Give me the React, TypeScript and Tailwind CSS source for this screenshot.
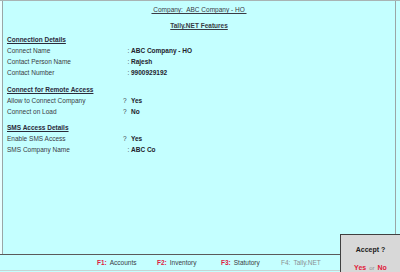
import React from "react";

type Row = { label: string; mark: ":" | "?"; value: string };

const SECTIONS: { title: string; gap: string; rows: Row[] }[] = [
  {
    title: "Connection Details",
    gap: "mt-[3px]",
    rows: [
      { label: "Connect Name", mark: ":", value: "ABC Company - HO" },
      { label: "Contact Person Name", mark: ":", value: "Rajesh" },
      { label: "Contact Number", mark: ":", value: "9900929192" },
    ],
  },
  {
    title: "Connect for Remote Access",
    gap: "mt-[6px]",
    rows: [
      { label: "Allow to Connect Company", mark: "?", value: "Yes" },
      { label: "Connect on Load", mark: "?", value: "No" },
    ],
  },
  {
    title: "SMS Access Details",
    gap: "mt-[5px]",
    rows: [
      { label: "Enable SMS Access", mark: "?", value: "Yes" },
      { label: "SMS Company Name", mark: ":", value: "ABC Co" },
    ],
  },
];

const KEYS = [
  { key: "F1:", label: "Accounts", w: "w-[60px]", off: false },
  { key: "F2:", label: "Inventory", w: "w-[64px]", off: false },
  { key: "F3:", label: "Statutory", w: "w-[60px]", off: false },
  { key: "F4:", label: "Tally.NET", w: "w-[60px]", off: true },
];

export default function App() {
  return (
    <div
      className="relative w-[400px] h-[272px] overflow-hidden bg-[#c4ffff] text-[6.5px] text-[#3a3a44]"
      style={{ fontFamily: '"Liberation Sans", Arial, sans-serif' }}
    >
      {/* Main panel */}
      <div className="h-[255px] border-t border-t-[#a8b4b4] border-b border-b-[#5a5a5a] flex">
        <div className="w-[2px] bg-[#e8ffff]" />
        <div className="flex-1 border-l border-l-[#9aa6a6] border-r border-r-[#9aa6a6] mr-[4px] flex flex-col">
          <div className="h-[14px] flex items-end justify-center">
            <span className="underline leading-[11px]">&nbsp;Company:&nbsp; ABC Company - HO&nbsp;</span>
          </div>
          <div className="h-[16px] flex items-end justify-center">
            <span className="font-bold underline leading-[11px]">Tally.NET Features</span>
          </div>

          <div className="pl-[4px] flex flex-col">
            {SECTIONS.map((s) => (
              <div key={s.title} className={s.gap}>
                <div className="h-[11px] leading-[11px] font-bold underline text-[#2a2a3a]">{s.title}</div>
                {s.rows.map((r) => (
                  <div key={r.label} className="h-[11px] leading-[11px] flex">
                    <span className="w-[116px]">{r.label}</span>
                    {r.mark === "?" ? (
                      <span className="w-[8px]">?</span>
                    ) : (
                      <span className="w-[8px] pl-[4.5px]">:</span>
                    )}
                    <span className="font-bold text-[#22222c]">{r.value}</span>
                  </div>
                ))}
              </div>
            ))}
          </div>
        </div>
      </div>

      {/* Footer keys */}
      <div className="h-[16px] border-b border-b-[#c8d4d4] flex items-center pl-[97px]">
        {KEYS.map((k) => (
          <div key={k.key} className={`${k.w} flex gap-[3px] ${k.off ? "text-[#8a9090]" : ""}`}>
            <span className={k.off ? "" : "font-bold text-[#e02040]"}>{k.key}</span>
            <span>{k.label}</span>
          </div>
        ))}
      </div>

      {/* Accept box */}
      <div className="absolute left-[340px] top-[234px] w-[60px] h-[38px] bg-[#d8d8d8] border-l border-t border-[#404040] flex flex-col items-center">
        <div className="mt-[10px] font-bold text-[7px] text-[#202020]">Accept ?</div>
        <div className="mt-[7px] flex items-baseline gap-[3px] text-[7px]">
          <span className="font-bold text-[#e01838]">Yes</span>
          <span className="text-[6px] text-[#909090]">or</span>
          <span className="font-bold text-[#e01838]">No</span>
        </div>
      </div>
    </div>
  );
}
